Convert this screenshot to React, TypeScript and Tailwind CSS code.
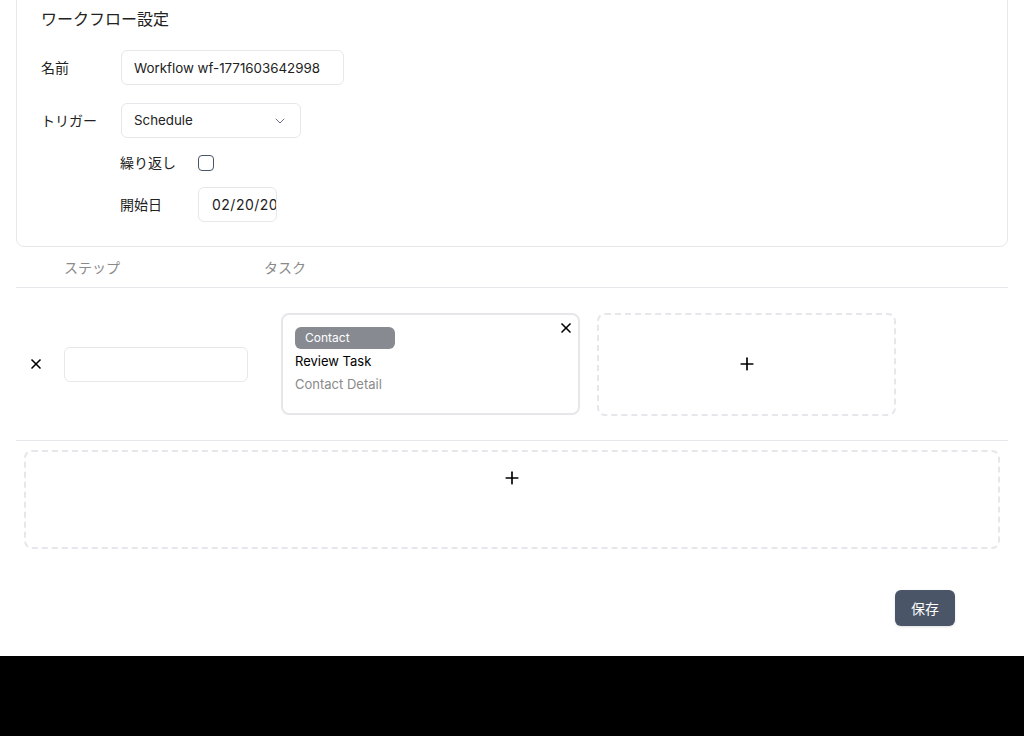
import React from 'react';
import { ChevronDown, Plus, X } from 'lucide-react';

const font = { fontFamily: 'Inter, "Noto Sans CJK JP", sans-serif' };

function TaskCard() {
  return (
    <div className="relative w-[299px] h-[102px] rounded-lg border-2 border-gray-200 bg-white px-3 pt-3">
      <button className="absolute right-[4px] top-[5px] text-black">
        <X className="w-4 h-4" strokeWidth={2.5} />
      </button>
      <span className="flex items-center w-[100px] h-[22px] rounded-md bg-[#878a91] px-[10px] text-[12px] text-white">
        Contact
      </span>
      <div className="mt-[1px] text-[13px] leading-[22px] text-black">Review Task</div>
      <div className="text-[13px] leading-[24px] text-[#8a8a8a]">Contact Detail</div>
    </div>
  );
}

export default function App() {
  return (
    <div className="h-[736px] bg-black overflow-hidden" style={font}>
      {/* page is scrolled a little, so the card's top edge sits above the viewport */}
      <div className="-mt-3 h-[668px] bg-white px-4 flow-root">
        {/* Settings card */}
        <div className="rounded-lg border border-gray-200 px-6 pt-[18px] pb-6">
          <h2 className="text-[16px] leading-[24px] text-[#222]">ワークフロー設定</h2>

          <div className="mt-[19px] flex items-center">
            <label className="w-20 text-[14px] text-[#222]">名前</label>
            <input
              readOnly
              value="Workflow wf-1771603642998"
              className="w-[223px] h-[35px] rounded-md border border-gray-200 px-3 text-[13.33px] text-[#222] outline-none"
            />
          </div>

          <div className="mt-[18px] flex items-center">
            <label className="w-20 text-[14px] text-[#222]">トリガー</label>
            <div className="flex w-[180px] h-[35px] items-center justify-between rounded-md border border-gray-200 px-3 text-[13.33px] text-[#222]">
              <span>Schedule</span>
              <ChevronDown className="w-4 h-4 text-gray-500" strokeWidth={1.5} />
            </div>
          </div>

          <div className="ml-[79px] mt-[7px] flex items-center h-[35px]">
            <label className="w-[78px] text-[14px] text-[#222]">繰り返し</label>
            <span className="w-4 h-4 rounded border border-[#4a5568] bg-white" />
          </div>

          <div className="ml-[79px] mt-[7px] flex items-center">
            <label className="w-[78px] text-[14px] text-[#222]">開始日</label>
            <div className="w-[79px] h-[35px] overflow-hidden whitespace-nowrap rounded-md border border-gray-200 pl-[13px] text-[14px] leading-[33px] tracking-[0.5px] text-[#222]">
              02/20/2026
            </div>
          </div>
        </div>

        {/* Steps table */}
        <div className="flex h-[41px] items-center border-b border-gray-200 text-[14px] text-[#8a8a8a]">
          <div className="w-12" />
          <div className="w-[200px]">ステップ</div>
          <div>タスク</div>
        </div>

        <div className="flex h-[153px] items-center border-b border-gray-200">
          <div className="w-12 pl-3">
            <X className="w-4 h-4 text-black" strokeWidth={2.5} />
          </div>
          <div className="w-[200px]">
            <input className="w-[184px] h-[35px] rounded-md border border-gray-200 px-3 text-[14px] outline-none" />
          </div>
          <div className="flex gap-[17px] pl-[17px]">
            <TaskCard />
            <button className="flex w-[299px] h-[103px] items-center justify-center rounded-lg border-2 border-dashed border-gray-200">
              <Plus className="w-5 h-5 text-black" strokeWidth={2} />
            </button>
          </div>
        </div>

        <div className="px-2 pt-[9px]">
          <button className="flex w-full h-[99px] justify-center rounded-lg border-2 border-dashed border-gray-200 pt-4">
            <Plus className="w-5 h-5 text-black" strokeWidth={2} />
          </button>
        </div>

        <div className="mt-[41px] flex justify-end pr-[53px]">
          <button className="w-[60px] h-9 rounded-md bg-[#4a5568] text-[14px] text-white shadow-sm">保存</button>
        </div>
      </div>
    </div>
  );
}
